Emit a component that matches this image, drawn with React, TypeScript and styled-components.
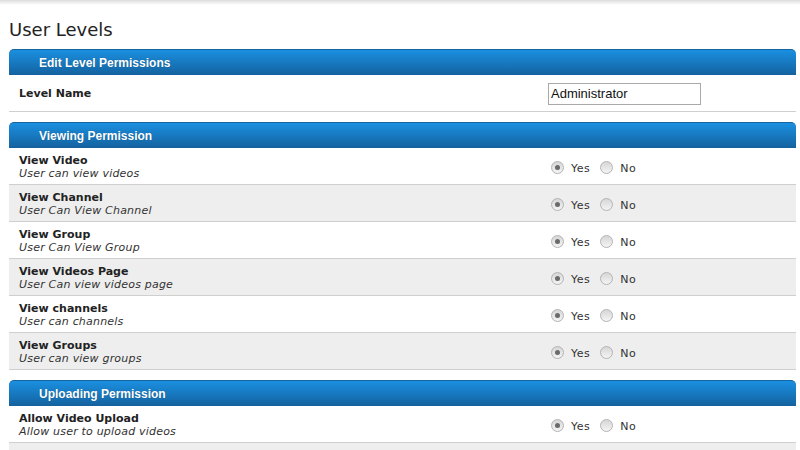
import React from "react";
import styled, { createGlobalStyle } from "styled-components";

const Global = createGlobalStyle`
  html, body { margin: 0; padding: 0; background: #fff; }
  body { font-family: "DejaVu Sans", Verdana, sans-serif; color: #333; }
`;

const TopShadow = styled.div`
  height: 5px;
  background: linear-gradient(#dcdcdc, #fff);
`;

const Page = styled.div`
  padding: 0 4px 0 9px;
`;

const Title = styled.h1`
  margin: 0;
  padding-top: 12px;
  height: 32px;
  font-family: "DejaVu Sans", Verdana, sans-serif;
  font-weight: normal;
  font-size: 18px;
  line-height: 25px;
  color: #222;
`;

const Section = styled.section<{ $first?: boolean }>`
  margin-top: ${(p) => (p.$first ? "0" : "10px")};
`;

const Header = styled.div`
  height: 26px;
  box-sizing: border-box;
  border-top: 1px solid #1565a0;
  border-radius: 5px 5px 0 0;
  background: linear-gradient(#1b8fe0, #1779c0 50%, #14629e);
  padding-left: 30px;
  display: flex;
  align-items: center;
  font-family: "Liberation Sans", Arial, sans-serif;
  font-weight: bold;
  font-size: 12px;
  color: #fff;
  text-shadow: 0 0 1px rgba(0, 0, 0, 0.3);
`;

const Row = styled.div<{ $alt?: boolean }>`
  display: grid;
  grid-template-columns: 539px 1fr;
  align-items: center;
  height: 37px;
  box-sizing: border-box;
  border-bottom: 1px solid #cfcfcf;
  background: ${(p) => (p.$alt ? "#eeeeee" : "#fff")};
`;

const Label = styled.div`
  padding: 1px 0 0 10px;
  font-size: 11px;
  line-height: 13px;
  color: #222;
`;

const Name = styled.div`
  font-weight: bold;
`;

const Desc = styled.div`
  font-style: italic;
  color: #333;
  letter-spacing: 0.2px;
`;

const TextInput = styled.input`
  width: 153px;
  height: 22px;
  box-sizing: border-box;
  border: 1px solid #a9a9a9;
  padding: 1px 2px;
  font-family: "Liberation Sans", Arial, sans-serif;
  font-size: 13px;
  color: #111;
  outline: none;
  margin-top: 1px;
`;

const Choices = styled.div`
  display: flex;
  align-items: center;
  padding-left: 3px;
  padding-top: 2px;
`;

const Radio = styled.span<{ $checked?: boolean }>`
  position: relative;
  width: 11px;
  height: 11px;
  border-radius: 50%;
  border: 1px solid #b4b4b4;
  background: linear-gradient(#d6d6d6, #f4f4f4);
  box-sizing: content-box;
  &::after {
    content: "";
    display: ${(p) => (p.$checked ? "block" : "none")};
    position: absolute;
    left: 3px;
    top: 3px;
    width: 5px;
    height: 5px;
    border-radius: 50%;
    background: #6a6a6a;
  }
`;

const ChoiceText = styled.span`
  font-size: 11px;
  color: #333;
  letter-spacing: 0.5px;
  margin: 2px 10px 0 7px;
`;

const perms = [
  ["View Video", "User can view videos"],
  ["View Channel", "User Can View Channel"],
  ["View Group", "User Can View Group"],
  ["View Videos Page", "User Can view videos page"],
  ["View channels", "User can channels"],
  ["View Groups", "User can view groups"],
];

const YesNo = () => (
  <Choices>
    <Radio $checked />
    <ChoiceText>Yes</ChoiceText>
    <Radio />
    <ChoiceText>No</ChoiceText>
  </Choices>
);

export default function App() {
  return (
    <>
      <Global />
      <TopShadow />
      <Page>
        <Title>User Levels</Title>
        <Section $first>
          <Header>Edit Level Permissions</Header>
          <Row>
            <Label>
              <Name>Level Name</Name>
            </Label>
            <div>
              <TextInput defaultValue="Administrator" />
            </div>
          </Row>
        </Section>
        <Section>
          <Header>Viewing Permission</Header>
          {perms.map(([n, d], i) => (
            <Row key={n} $alt={i % 2 === 1}>
              <Label>
                <Name>{n}</Name>
                <Desc>{d}</Desc>
              </Label>
              <YesNo />
            </Row>
          ))}
        </Section>
        <Section>
          <Header>Uploading Permission</Header>
          <Row>
            <Label>
              <Name>Allow Video Upload</Name>
              <Desc>Allow user to upload videos</Desc>
            </Label>
            <YesNo />
          </Row>
          <Row $alt />
        </Section>
      </Page>
    </>
  );
}
